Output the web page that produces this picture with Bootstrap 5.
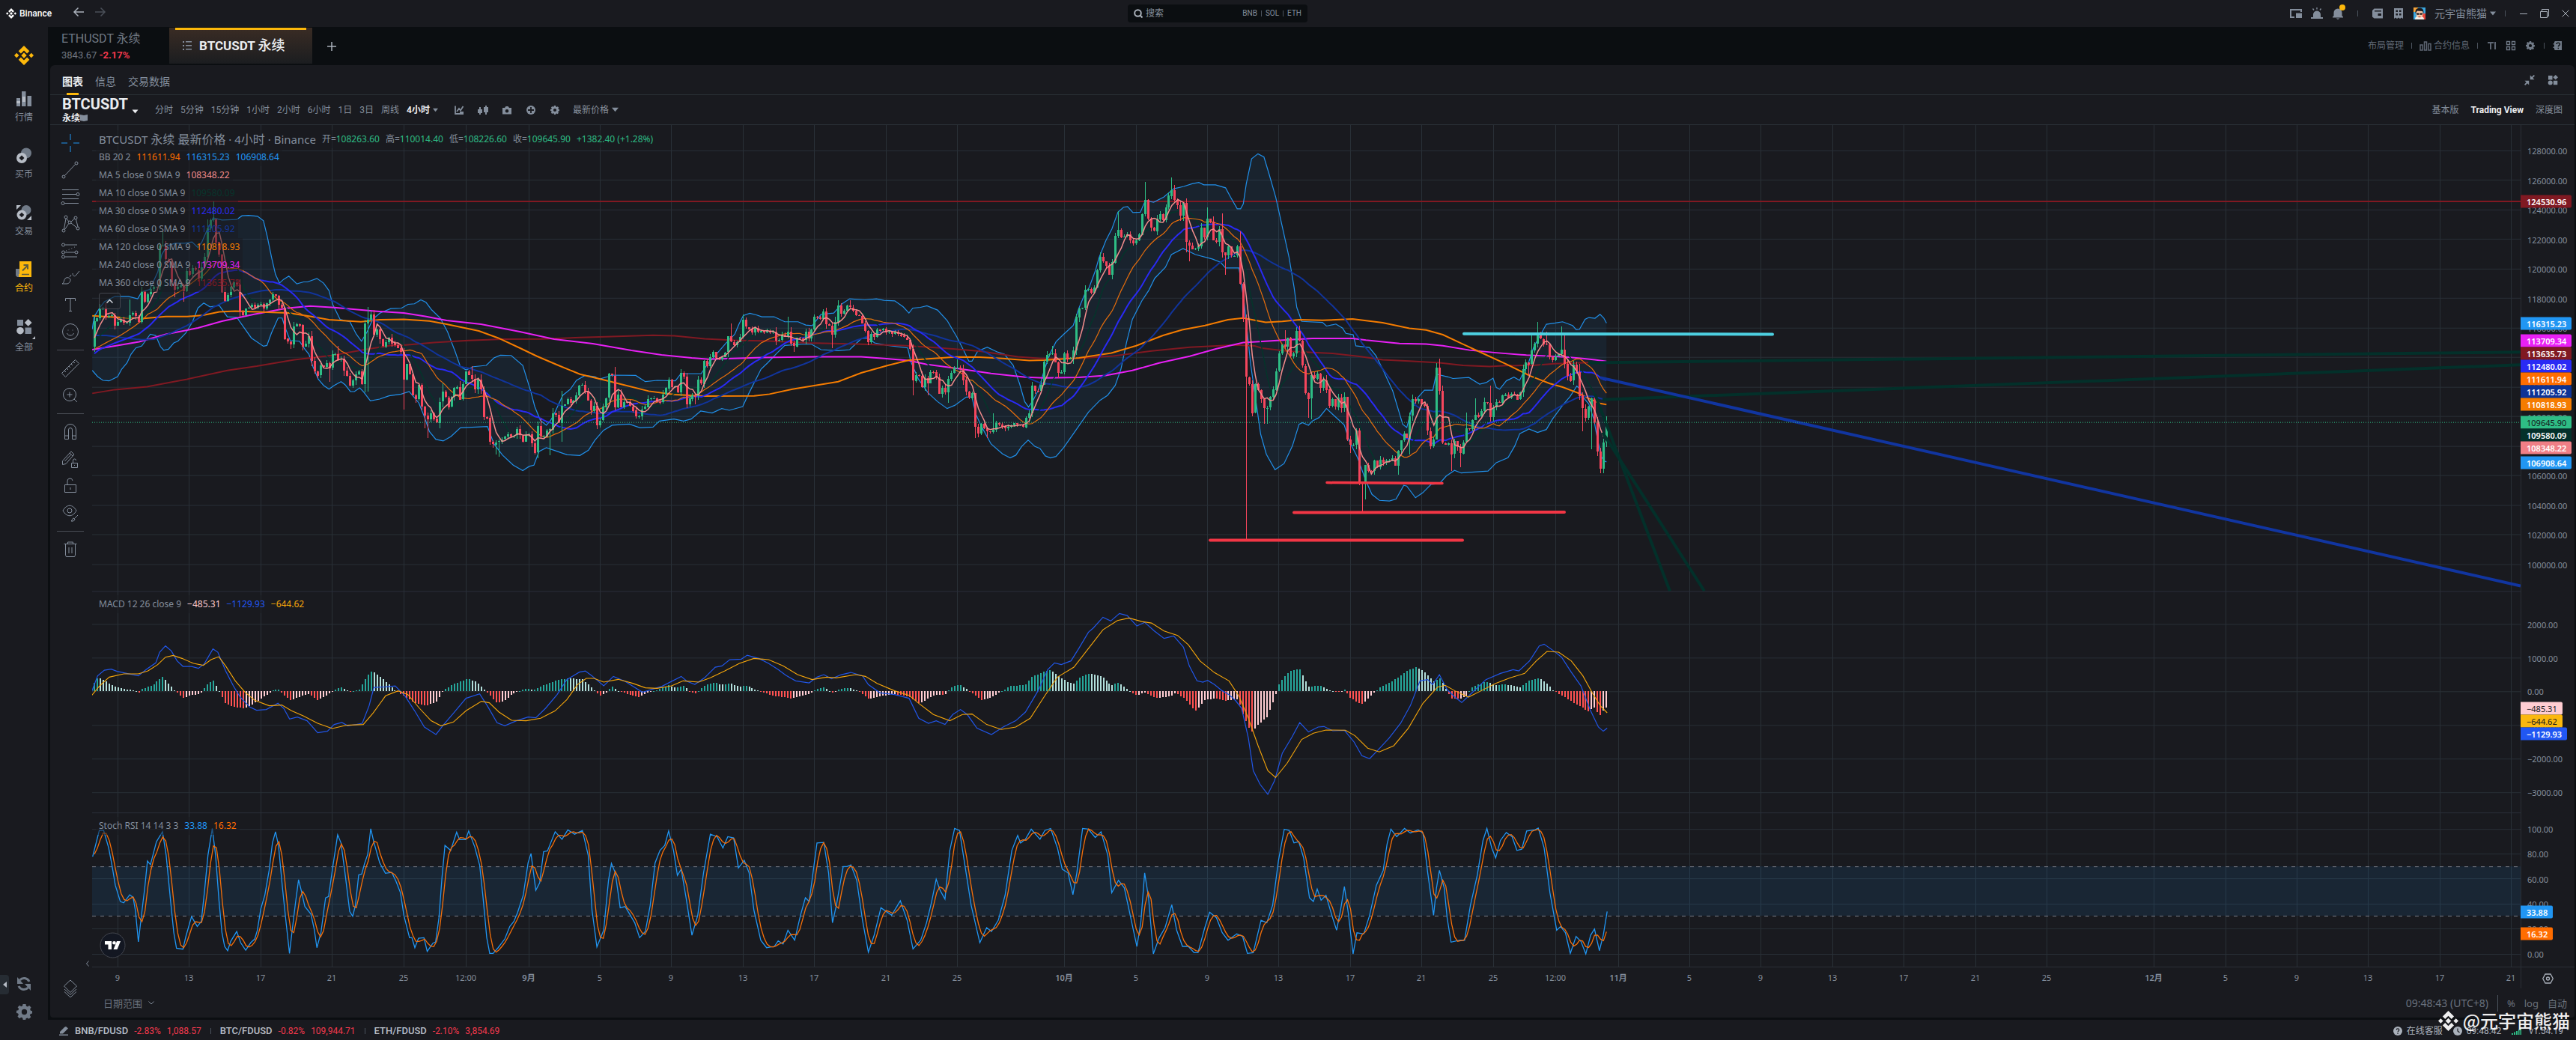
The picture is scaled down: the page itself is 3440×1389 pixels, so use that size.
<!DOCTYPE html>
<html lang="zh-CN" data-bs-theme="dark">
<head>
<meta charset="utf-8">
<meta name="viewport" content="width=device-width, initial-scale=1">
<title>Binance - BTCUSDT 永续</title>
<link href="https://cdn.jsdelivr.net/npm/bootstrap@5.3.0/dist/css/bootstrap.min.css" rel="stylesheet">
<style>
:root{--ink:#191a1f;--deep:#0b0e11;--rule:#2a3036;--dim:#848e9c;--faint:#5e6673;--gold:#fcb80b;--up:#2ebd85;--down:#f6465d}
body{font-family:Roboto,"Noto Sans CJK SC",sans-serif;font-size:12px;line-height:16px;background:var(--deep);color:var(--dim);height:100vh;overflow:hidden}
.btn{--bs-btn-font-size:12px;--bs-btn-line-height:16px;--bs-btn-color:inherit;color:inherit;white-space:nowrap}
a{color:inherit;text-decoration:none;white-space:nowrap}
svg.ico{width:16px;height:16px;display:block;flex:none}
.topline{height:36px;background:var(--ink)}
.seek{width:240px;height:24px;background:var(--deep);border-radius:4px;left:calc(50% - 214px);top:6px}
.seek input{width:110px;height:22px;line-height:22px;background:transparent;border:0;outline:0;color:var(--dim);padding:0;font-size:12px}
.seek input::placeholder{color:var(--dim);opacity:1}
.seek a{font-size:10px}
.tick{width:1px;height:8px;background:#4a525c;flex:none}
.side{width:64px;background:var(--ink)}
.side .slot{height:76px;gap:6px}
.side .slot svg{width:22px;height:22px}
.side .gold{color:var(--gold)}
.handle{left:0;bottom:61px;width:12px;height:26px;background:#262c33;border-radius:0 4px 4px 0}
.tabs-row{height:51px}
.eth-tab{width:162px;padding:6px 0 0 18px;color:#6f7782}
.eth-tab .nm{font-size:16px;line-height:20px}
.eth-tab .pr{font-size:13px;line-height:24px}
.btc-tab{width:191px;height:48px;margin-top:1px;background:linear-gradient(#3a2c24,#1b1d20);color:#eaecef;font-size:17px;font-weight:700}
.btc-tab::before{content:"";position:absolute;left:8px;right:8px;top:0;height:3px;background:var(--gold)}
.btc-tab .cj{font-size:18px;font-weight:500}
.panel{background:var(--ink);border-radius:6px 6px 4px 4px;margin:0 2px 0 3px}
.panel-head{height:40px;border-bottom:1px solid var(--rule);padding:0 21px 0 16px;font-size:14px}
.panel-head .btn{--bs-btn-font-size:14px}
.panel-head .act{color:#eaecef;font-weight:700}
.panel-head .act::after{content:"";position:absolute;left:6px;bottom:-10px;width:16px;height:3px;background:var(--gold)}
.ctrl-row{height:40px;border-bottom:1px solid var(--rule);padding:0 16px}
.sym{width:124px;color:#eaecef}
.sym .big{font-size:20px;line-height:22px;font-weight:700}
.lit{color:#eaecef;font-weight:700}
.frames{gap:10px}
.tools{width:56px;padding:6px 3px 20px 0}
.tools .btn{height:36px;width:36px;display:flex;align-items:center;justify-content:center}
.tools .btn svg{width:28px;height:28px;fill:none;stroke:#848e9c;stroke-width:1}
.tools hr{width:36px;margin:6px 0;border-top:1px solid #4a4d55;opacity:1}
.plot{font-family:"Noto Sans","Noto Sans CJK SC",sans-serif}
.plot svg.big{position:absolute;inset:0;width:100%;height:100%}
.lgd{position:absolute;left:5px;z-index:2;line-height:24px;font-size:12px;white-space:nowrap}
.lgd .ln{background:rgba(25,26,31,.5);padding:0 4px;width:max-content;gap:8px}
.lgd .ttl{font-size:15px}.lgd .ttl .cj{font-size:16px}
.scale{width:72px;border-left:1px solid var(--rule);font-family:"Noto Sans",sans-serif;font-size:11px}
.scale span{position:absolute;left:8px;line-height:17px;transform:translateY(-50%)}
.scale span.tagv{left:-1px;padding:0 8px;width:68px;height:17px;border-radius:0 2px 2px 0;color:#fff;font-weight:600}
.dates{height:28px;font-family:"Noto Sans","Noto Sans CJK SC",sans-serif;font-size:11px}
.dates span{position:absolute;top:6px;transform:translateX(-50%)}
.dates-end{width:72px;border-left:1px solid var(--rule)}
.below{height:39px;padding:0 10px 0 15px;font-family:"Noto Sans","Noto Sans CJK SC",sans-serif;color:#6b727d}
.below .btn{font-size:13px}
.below .clock{font-size:14px}
.foot{height:27px;background:var(--ink);padding:3px 17px 0 14px}
.foot b{font-size:13px;font-weight:500;color:#b7bdc6}
.foot .neg,.neg{color:#f6394d}
.fold{left:9px;top:224px;width:29px;height:22px;border:1px solid #43464e!important;border-radius:3px;z-index:3;background:rgba(25,26,31,.6)!important;display:flex;align-items:center;justify-content:center}
.tvmark{left:10px;bottom:11px;width:35px;height:35px;z-index:3}
.stamp{right:8px;bottom:9px;height:34px;color:#fff;font-family:"Noto Sans CJK SC",sans-serif;font-size:24px;font-weight:500;line-height:34px;opacity:.93;pointer-events:none;z-index:5;gap:6px}
</style>
<script src="https://cdn.jsdelivr.net/npm/bootstrap@5.3.0/dist/js/bootstrap.bundle.min.js"></script>
</head>
<body class="d-flex flex-column m-0">
<svg width="0" height="0" class="position-absolute" aria-hidden="true">
<symbol id="bnb" viewBox="0 0 26 26"><path fill="currentColor" d="M13 0l7.3 7.3-3.2 3.2L13 6.4 8.9 10.500 5.700 7.300zM3.200 9.800L6.400 13l-3.200 3.200L0 13zM22.800 9.800L26 13l-3.200 3.200L19.600 13zM13 9.300l3.700 3.700-3.700 3.700L9.300 13zM8.900 15.500l4.100 4.100 4.100-4.100 3.200 3.200L13 26l-7.300-7.300z"/></symbol>
<symbol id="gear" viewBox="0 0 16 16"><path fill="currentColor" fill-rule="evenodd" d="M6.500 0h3l.4 2 1.500.6L13 1.500 14.900 3.500l-1.100 1.700.6 1.500 1.600.3v2.600l-1.800.4-.6 1.500 1.100 1.600-2 2-1.600-1.100-1.500.6L9.300 16H6.600l-.4-1.900-1.500-.6-1.700 1.100-1.900-2L2.200 11l-.6-1.500L0 9.200V6.600l1.800-.4.600-1.400L1.200 3.200l2-1.900 1.500 1.100 1.500-.6zM8 5.200a2.800 2.800 0 100 5.600 2.800 2.800 0 000-5.600z"/></symbol>
<symbol id="caret" viewBox="0 0 8 6"><path fill="currentColor" d="M0 .5h8L4 5.500z"/></symbol>
<symbol id="apps" viewBox="0 0 16 16"><path fill="currentColor" d="M2 2h5.500v5.500H2zM11.700.900l3.300 3.300-3.300 3.300-3.300-3.300zM8.800 8.800h5.500v5.500H8.800z"/><circle cx="4.700" cy="11.600" r="3" fill="currentColor"/></symbol>
</svg>

<header class="topline d-flex align-items-center position-relative flex-shrink-0">
  <a href="#" class="d-flex align-items-center text-white ms-2"><svg class="ico" style="width:14px;height:14px"><use href="#bnb"/></svg><span class="ms-1 fw-medium">Binance</span></a>
  <div class="d-flex ms-4 ps-1 pb-1" style="gap:13px">
    <button class="btn p-0 border-0" aria-label="后退"><svg class="ico" viewBox="0 0 16 16" fill="none" stroke="#aab1bb" stroke-width="1.500"><path d="M15 8H2M7.500 2.500L2 8l5.500 5.500"/></svg></button>
    <button class="btn p-0 border-0" aria-label="前进"><svg class="ico" viewBox="0 0 16 16" fill="none" stroke="#4a4f58" stroke-width="1.500"><path d="M1 8h13M8.500 2.500L14 8l-5.500 5.500"/></svg></button>
  </div>
  <div class="seek d-flex align-items-center position-absolute px-2">
    <svg class="ico me-1" style="width:12px;height:12px" viewBox="0 0 12 12" fill="none" stroke="#aab1bb" stroke-width="2"><circle cx="5.500" cy="5.500" r="4.300"/><path d="M8.500 8.500l3 3"/></svg>
    <label class="visually-hidden" for="q">搜索</label><input id="q" type="text" placeholder="搜索">
    <div class="d-flex align-items-center ms-auto" style="gap:5px"><a href="#">BNB</a><i class="tick"></i><a href="#">SOL</a><i class="tick"></i><a href="#">ETH</a></div>
  </div>
  <div class="d-flex align-items-center ms-auto" style="gap:12px;padding-right:6px">
    <button class="btn p-0 border-0" aria-label="画中画"><svg class="ico" viewBox="0 0 16 16"><path fill="#848e9c" d="M0 2h16v4h-2V4H2v8h4v2H0z"/><path fill="#848e9c" d="M8 7.500h8V14H8z"/></svg></button>
    <button class="btn p-0 border-0" aria-label="提醒"><svg class="ico" viewBox="0 0 16 16"><path fill="#848e9c" d="M3 13V9.500a5 5 0 0110 0V13zM0 13h16v2H0z"/><path stroke="#848e9c" stroke-width="1.400" d="M8 0v2.500M2.500 1.500L4 3.500M13.500 1.500L12 3.500"/></svg></button>
    <button class="btn p-0 border-0 position-relative" aria-label="通知"><svg class="ico" viewBox="0 0 16 16"><path fill="#848e9c" d="M2.500 11V7a5.500 5.500 0 0111 0v4l1.500 1.500v1H1v-1zM5.500 14.500h5L8 16z"/></svg><i class="position-absolute rounded-circle" style="width:8px;height:8px;background:#fcb80b;right:-2px;top:-4px"></i></button>
    <i class="tick" style="margin:0 6px"></i>
    <button class="btn p-0 border-0" aria-label="钱包"><svg class="ico" viewBox="0 0 16 16"><path fill="#848e9c" fill-rule="evenodd" d="M3.500 1.500H15v13H3.500L1 12.500V4zM4 4v1.500h9V4zM8.500 8v3H13V8z"/></svg></button>
    <button class="btn p-0 border-0" aria-label="订单"><svg class="ico" viewBox="0 0 16 16"><path fill="#848e9c" fill-rule="evenodd" d="M2 1h12v14l-2-1.500L10 15l-2-1.500L6 15l-2-1.500L2 15zM4.500 3.500V6H7V3.500zM9 3.500V6h2.500V3.500zM4.500 8v2.500H7V8zM9 8v2.500h2.500V8z"/></svg></button>
    <svg class="ico" viewBox="0 0 16 16"><path fill="#3aa7e0" d="M0 0h16v16H0z"/><path fill="#e8443a" d="M9 8h7v8H9z"/><path fill="#f3a33a" d="M0 0h6v6H0z"/><path fill="#f3f0ea" d="M2 16c0-4 3-4.500 6-4.500s6 1 6 4.500z"/><ellipse cx="8" cy="8" rx="4.800" ry="5.800" fill="#f6c7a6"/><path fill="#1c1a1c" d="M2.500 8C2 2 5 .8 8.500.800 12.500.800 14 3.500 13.300 8L12 5 5 4.500zM3.500 7.500h4v2.200h-3zM8.500 7.500h4l-1 2.200h-3z"/><path fill="#c0392b" d="M6.500 12h3v1h-3z"/></svg>
    <a href="#" class="d-flex align-items-center gap-1" style="font-size:14px">元宇宙熊猫<svg style="width:8px;height:6px"><use href="#caret"/></svg></a>
    <i class="tick me-1"></i>
    <button class="btn p-0 border-0" aria-label="最小化"><svg class="ico" viewBox="0 0 16 16"><path stroke="#aab1bb" d="M3 8.500h10"/></svg></button>
    <button class="btn p-0 border-0" aria-label="还原"><svg class="ico" viewBox="0 0 16 16" fill="none" stroke="#aab1bb"><path d="M2.500 5.500h9v8h-9zM4.500 5V2.500h9v9H12"/></svg></button>
    <button class="btn p-0 border-0" aria-label="关闭"><svg class="ico" viewBox="0 0 16 16" fill="none" stroke="#aab1bb"><path d="M3.500 3.500l9 9M12.500 3.500l-9 9"/></svg></button>
  </div>
</header>

<div class="d-flex flex-fill" style="min-height:0">
<nav class="side d-flex flex-column align-items-center flex-shrink-0 position-relative">
  <a href="#" class="gold" style="margin:25px 0 34px"><svg style="width:26px;height:26px;display:block"><use href="#bnb"/></svg></a>
  <a href="#" class="slot d-flex flex-column align-items-center"><svg viewBox="0 0 22 22"><path fill="#848e9c" d="M1 10h5v11H1zM8 1h5.500v20H8zM15.500 7H21v14h-5.500z"/><path fill="#b7bdc6" d="M1 14h5v3H1zM9 8h4v7H9z"/></svg><span>行情</span></a>
  <a href="#" class="slot d-flex flex-column align-items-center"><svg viewBox="0 0 22 22"><circle cx="14" cy="7.500" r="7" fill="#707a87"/><circle cx="8" cy="14" r="7" fill="#b7bdc6"/><path fill="#191a1f" d="M8 10.500l3.500 3.500L8 17.500 4.500 14z"/></svg><span>买币</span></a>
  <a href="#" class="slot d-flex flex-column align-items-center"><svg viewBox="0 0 22 22"><circle cx="14" cy="7.500" r="6.500" fill="#707a87"/><circle cx="8" cy="14" r="6.500" fill="#b7bdc6"/><path fill="#191a1f" d="M8 10.700l3.300 3.300L8 17.300 4.700 14z"/><path fill="#b7bdc6" d="M1 1h6L1 7zM21 15v6h-6z"/></svg><span>交易</span></a>
  <a href="#" class="slot d-flex flex-column align-items-center gold"><svg viewBox="0 0 22 22"><path fill="#707a87" d="M0 10h8v11H2l-2-2z"/><path fill="#fcb80b" d="M5 0h16v21H4v-4h1z"/><path d="M9 12.500l7-7M10.500 5H16v5.500" fill="none" stroke="#5d5c3e" stroke-width="2"/><path stroke="#5d5c3e" stroke-width="1.500" d="M8 17.500h10"/></svg><span>合约</span></a>
  <a href="#" class="slot d-flex flex-column align-items-center position-relative" style="gap:9px"><svg viewBox="0 0 22 22"><path fill="#848e9c" d="M2 2h8v8H2zM12.500 12.500H21v8.500h-8.500z"/><path fill="#b7bdc6" d="M16.700 1l4.900 4.900-4.900 4.900-4.900-4.900z"/><circle cx="6" cy="16.700" r="4.800" fill="#b7bdc6"/></svg><span>全部</span><svg class="position-absolute" style="width:4px;height:4px;right:-3px;top:24px" viewBox="0 0 4 4"><path fill="#b7bdc6" d="M4 0v4H0z"/></svg></a>
  <button class="btn p-0 border-0 handle position-absolute text-center" aria-label="收起"><svg width="5" height="8" viewBox="0 0 5 8" class="d-block mx-auto"><path fill="#b7bdc6" d="M5 0v8L0 4z"/></svg></button>
  <div class="mt-auto d-flex flex-column align-items-center" style="gap:17px;padding-bottom:27px">
    <button class="btn p-0 border-0" aria-label="刷新"><svg width="20" height="20" viewBox="0 0 20 20" class="d-block" fill="none" stroke="#707a87" stroke-width="3"><path d="M17 7A7.500 7.500 0 004.500 5M3 13a7.500 7.500 0 0012.500 2"/><path fill="#707a87" stroke="none" d="M1 1v9h8zM19 19v-9h-8z"/></svg></button>
    <button class="btn p-0 border-0" aria-label="设置" style="color:#707a87"><svg width="21" height="21" class="d-block"><use href="#gear"/></svg></button>
  </div>
</nav>

<div class="d-flex flex-column flex-fill" style="min-width:0">
  <div class="tabs-row d-flex align-items-start flex-shrink-0">
    <a href="#" class="eth-tab d-flex flex-column"><span class="nm">ETHUSDT 永续</span><span class="pr">3843.67 <b class="neg">-2.17%</b></span></a>
    <a href="#" class="btc-tab d-flex align-items-center position-relative ps-3"><svg class="ico me-2" viewBox="0 0 16 16" fill="#848e9c"><path d="M2 2h2v2H2zM6 2h8v1.500H6zM2 7h2v2H2zM6 7h8v1.500H6zM2 12h2v2H2zM6 12h8v1.500H6z"/></svg><span>BTCUSDT <span class="cj">永续</span></span></a>
    <button class="btn p-0 border-0 ms-3 pt-3" aria-label="新增"><svg class="ico mt-1 ms-1" style="width:12px;height:12px" viewBox="0 0 12 12" stroke="#aab1bb" stroke-width="1.500"><path d="M6 0v12M0 6h12"/></svg></button>
    <div class="d-flex align-items-center ms-auto" style="height:50px;gap:10px;padding-right:16px;color:#5e6673">
      <a href="#">布局管理</a><i class="tick"></i>
      <a href="#" class="d-flex align-items-center" style="gap:3px"><svg class="ico" viewBox="0 0 16 16" fill="none" stroke="#5e6673" stroke-width="1.500"><path d="M1 7h3v7H1zM6.500 3h3v11h-3zM12 5.500h3V14h-3z"/></svg>合约信息</a><i class="tick"></i>
      <button class="btn p-0 border-0" aria-label="文字"><svg class="ico" viewBox="0 0 16 16" stroke="#5e6673" stroke-width="2" fill="none"><path d="M3 4h8M7 4v9M13 3v10"/></svg></button>
      <button class="btn p-0 border-0" aria-label="布局"><svg class="ico" viewBox="0 0 16 16" fill="none" stroke="#707a87" stroke-width="1.300"><path d="M2.500 2.500h4v4h-4zM9.500 2.500h4v4h-4zM2.500 9.500h4v4h-4zM9.500 9.500h4v4h-4z"/></svg></button>
      <button class="btn p-0 border-0" aria-label="设置" style="color:#707a87"><svg class="ico" style="padding:2px"><use href="#gear"/></svg></button>
      <i class="tick"></i>
      <button class="btn p-0 border-0" aria-label="帮助"><svg class="ico" viewBox="0 0 16 16"><path fill="#707a87" d="M4 2h9v12H4l-1-1v-2H1.500V9.500H3v-3H1.500V5H3V3z"/><path d="M6 6c0-2.500 4.500-2.500 4.500 0 0 1.700-2.200 1.500-2.200 3.300M8.300 10.800v1.400" fill="none" stroke="#0b0e11" stroke-width="1.400"/></svg></button>
    </div>
  </div>

  <main class="panel d-flex flex-column flex-fill" style="min-height:0">
    <div class="panel-head d-flex align-items-center flex-shrink-0">
      <div class="d-flex gap-3 mt-1">
        <button class="btn p-0 border-0 position-relative act">图表</button><button class="btn p-0 border-0">信息</button><button class="btn p-0 border-0">交易数据</button>
      </div>
      <div class="d-flex ms-auto" style="gap:15px">
        <button class="btn p-0 border-0" aria-label="缩小"><svg class="ico" viewBox="0 0 16 16"><path fill="#848e9c" d="M8.800 1.500v5.700h5.700L12.300 5 15 2.300 13.700 1 11 3.700zM7.200 14.500V8.800H1.500L3.700 11 1 13.700 2.300 15 5 12.300z"/></svg></button>
        <button class="btn p-0 border-0" aria-label="组件" style="color:#848e9c"><svg class="ico"><use href="#apps"/></svg></button>
      </div>
    </div>
    <div class="ctrl-row d-flex align-items-center flex-shrink-0">
      <button class="sym btn p-0 border-0 text-start position-relative"><span class="big d-block">BTCUSDT</span><span class="d-flex fw-bold align-items-center">永续<svg width="10" height="9" viewBox="0 0 10 9"><path fill="#848e9c" d="M0 0l5 1 5-1v8L5 9 0 8zM4.600 2h.800v5h-.800z"/></svg></span><svg class="position-absolute" style="left:93px;top:18px;width:9px;height:6px"><use href="#caret"/></svg></button>
      <div class="frames d-flex align-items-center">
        <button class="btn p-0 border-0">分时</button><button class="btn p-0 border-0">5分钟</button><button class="btn p-0 border-0">15分钟</button><button class="btn p-0 border-0">1小时</button><button class="btn p-0 border-0">2小时</button><button class="btn p-0 border-0">6小时</button><button class="btn p-0 border-0">1日</button><button class="btn p-0 border-0">3日</button><button class="btn p-0 border-0">周线</button>
        <button class="btn p-0 border-0 lit d-flex align-items-center gap-1">4小时<svg width="7" height="6" style="color:#848e9c"><use href="#caret"/></svg></button>
      </div>
      <div class="d-flex align-items-center gap-3 ms-3 ps-1">
        <button class="btn p-0 border-0" aria-label="指标"><svg class="ico" viewBox="0 0 16 16" fill="none" stroke="#848e9c" stroke-width="1.800"><path d="M3 2.500V13h11M5 10l3-4 2 2.500L13.500 3M9 11h5"/></svg></button>
        <button class="btn p-0 border-0" aria-label="K线样式"><svg class="ico" viewBox="0 0 16 16"><path fill="#848e9c" d="M1 7h2V4h2v3h2v5H5v2H3v-2H1zM9 4h2V2h2v2h2v7h-2v3h-2v-3H9z"/></svg></button>
        <button class="btn p-0 border-0" aria-label="截图"><svg class="ico" viewBox="0 0 16 16"><path fill="#848e9c" fill-rule="evenodd" d="M2 5h3l1.500-2h3L11 5h3v8.500H2zM8 7a2.300 2.300 0 100 4.600A2.300 2.300 0 008 7z"/></svg></button>
        <button class="btn p-0 border-0" aria-label="添加"><svg class="ico" viewBox="0 0 16 16"><circle cx="8" cy="8" r="6" fill="#848e9c"/><path d="M8 4v8M4 8h8" stroke="#191a1f" stroke-width="1.800"/></svg></button>
        <button class="btn p-0 border-0" aria-label="图表设置"><svg class="ico" style="padding:2px"><use href="#gear"/></svg></button>
        <button class="btn p-0 border-0 d-flex align-items-center gap-1">最新价格<svg width="9" height="7"><use href="#caret"/></svg></button>
      </div>
      <div class="d-flex ms-auto gap-3"><a href="#">基本版</a><a href="#" class="lit">Trading View</a><a href="#">深度图</a></div>
    </div>

    <div class="d-flex flex-fill" style="min-height:0">
      <div class="tools d-flex flex-column align-items-center flex-shrink-0 position-relative" id="tools"></div>
      <div class="d-flex flex-column flex-fill" style="min-width:0">
        <div class="d-flex flex-fill" style="min-height:0">
          <div class="plot flex-fill position-relative overflow-hidden" id="plot">
            <svg class="big" id="cv" viewBox="123 167 3243 1125" preserveAspectRatio="none"></svg>
            <div class="lgd" style="top:7px" id="lg1"></div>
            <button class="btn p-0 fold position-absolute" aria-label="折叠图例"><svg width="9" height="6" viewBox="0 0 9 6"><path d="M.5 5.500l4-4 4 4" fill="none" stroke="#d5d9df" stroke-width="1.500"/></svg></button>
            <div class="lgd" id="lg2"></div><div class="lgd" id="lg3"></div>
            <a href="#" class="tvmark position-absolute" aria-label="TradingView"><svg width="35" height="35" viewBox="0 0 35 35"><circle cx="17.500" cy="17.500" r="16.500" fill="#131722" stroke="#43464e"/><path fill="#fff" d="M7 12h9v11h-4.500v-6.500H7zM23 12h5l-4.500 11h-5z"/><circle cx="19.500" cy="14.300" r="2.300" fill="#fff"/></svg></a>
          </div>
          <div class="scale position-relative flex-shrink-0" id="scale"></div>
        </div>
        <div class="d-flex flex-shrink-0" style="border-top:1px solid var(--rule)"><div class="dates flex-fill position-relative" id="dates"></div><div class="dates-end"><svg class="mx-auto d-block mt-2" width="15" height="14" viewBox="0 0 15 14" fill="none" stroke="#aab1bb" stroke-width="1.300"><path d="M4 1h7l3.300 6L11 13H4L.7 7z"/><circle cx="7.500" cy="7" r="2"/></svg></div></div>
        <div class="below d-flex align-items-center flex-shrink-0">
          <button class="btn p-0 border-0 d-flex align-items-center gap-2">日期范围<svg width="8" height="5" viewBox="0 0 8 5"><path d="M.5.500L4 4 7.500.500" fill="none" stroke="#848e9c"/></svg></button>
          <div class="d-flex align-items-center ms-auto" style="gap:12px"><span class="clock">09:48:43 (UTC+8)</span><i class="tick" style="height:22px"></i><button class="btn p-0 border-0">%</button><button class="btn p-0 border-0">log</button><button class="btn p-0 border-0">自动</button></div>
        </div>
      </div>
    </div>
  </main>
  <div style="height:3px" class="flex-shrink-0"></div>
  <footer class="foot d-flex align-items-center flex-shrink-0 position-relative">
    <svg class="ico me-2" style="width:14px;height:14px" viewBox="0 0 14 14"><path fill="#848e9c" d="M2 8l6-6 2-1 3 2.500-7 7H2zM1 11.500h12V13H1z"/></svg>
    <a href="#" class="d-flex gap-2 neg"><b>BNB/FDUSD</b><span>-2.83%</span><span>1,088.57</span></a><i class="tick" style="margin:0 12px"></i>
    <a href="#" class="d-flex gap-2 neg"><b>BTC/FDUSD</b><span>-0.82%</span><span>109,944.71</span></a><i class="tick" style="margin:0 12px"></i>
    <a href="#" class="d-flex gap-2 neg"><b>ETH/FDUSD</b><span>-2.10%</span><span>3,854.69</span></a>
    <div class="d-flex align-items-center ms-auto" style="gap:6px;color:#aab1bb">
      <svg class="ico" style="width:12px;height:12px" viewBox="0 0 12 12"><circle cx="6" cy="6" r="6" fill="#aab1bb"/><path d="M4.200 4.600c0-2.200 3.600-2.200 3.600 0C7.800 6 6 5.800 6 7.300M6 8.500V10" stroke="#191a1f" stroke-width="1.200" fill="none"/></svg><a href="#" class="me-2">在线客服</a>
      <svg class="ico" style="width:12px;height:12px" viewBox="0 0 12 12"><circle cx="6" cy="6" r="6" fill="#aab1bb"/><path d="M6 2.500V6l2.500 2" stroke="#191a1f" stroke-width="1.200" fill="none"/></svg><span class="me-2">09:48:42</span>
      <svg width="13" height="9" viewBox="0 0 13 9" class="me-1"><path fill="#2ebd85" d="M0 7h2v2H0zM3 5.500h2V9H3zM6 4h2v5H6zM9 2h1.500v7H9zM11.500 0H13v9h-1.500z"/></svg><span>v1.54.19</span>
    </div>
  </footer>
</div>
</div>
<div class="stamp position-absolute d-flex align-items-center"><svg width="27" height="27"><use href="#bnb"/></svg><span>@元宇宙熊猫</span></div>

<script>
// drawing tools, top to bottom; "-" is a separator, ">" pushes the last one down
const toolIcons=[
['十字线','<path stroke="#2196f3" d="M14 2v8M14 18v8M2 14h8M18 14h8"/>'],
['趋势线','<circle cx="5" cy="23" r="2"/><circle cx="22" cy="5" r="2"/><path d="M6.500 21.500L20.500 6.500"/>'],
['斐波那契','<path d="M3 4.500h22M3 10.500h19M3 16.500h22M6 22.500h19"/><circle cx="24" cy="10.500" r="2"/><circle cx="4" cy="22.500" r="2"/>'],
['形态','<circle cx="5" cy="23" r="2"/><circle cx="8" cy="5" r="2"/><circle cx="13" cy="12" r="2"/><circle cx="21" cy="6" r="2"/><circle cx="24" cy="20" r="2"/><path d="M5.500 21L8 7M9 7l3 4M15 11l4.500-4M21.500 8L24 18M6.500 21.500l5-7.500M15 13l7.500 6"/>'],
['预测','<circle cx="4.500" cy="6" r="2"/><circle cx="4.500" cy="16" r="2"/><circle cx="22" cy="16" r="2"/><circle cx="4.500" cy="22" r="2"/><path d="M6.500 6H23M6.500 16H20M6.500 22H23"/><path stroke-dasharray="1 3" d="M8 14l14-6"/>'],
['画笔','<path d="M3 22c3-1 2-5 4-7 2.500-2.500 6-1 7 1 .5 3-2 6-5 6zM13 13l2-3M17 8c0 4 3 5 5 2l4-5"/>'],
['文字','<path d="M7.500 9V5.500h13V9M14 5.500v17M12 22.500h4"/>'],
['表情','<circle cx="14" cy="14" r="10.500"/><path d="M9.500 16c1 4 8 4 9 0M11 11.500v1M17 11.500v1"/>'],'-',
['尺子','<path d="M2.500 20.500L20.500 2.500l5 5-18 18zM6 17l2 2M9 14l2 2M12 11l2 2M15 8l2 2M18 5l2 2"/>'],
['放大','<circle cx="13" cy="13" r="8.500"/><path d="M19 19l4 4M13 9.500v7M9.500 13h7"/>'],'-',
['磁铁','<path d="M6.500 23.500V11a7.500 7.500 0 0115 0v12.500h-5V11a2.500 2.500 0 00-5 0v12.500zM6.500 19h5M16.500 19h5"/>'],
['锁定绘图','<path d="M3.500 21.500v-5L15 4l4 4L8 20.500zM13 6l4 4M6.500 17l8-8.500M15.500 19.500h8v6h-8zM17.500 19v-3a2 2 0 014 0M19.500 22v1"/>'],
['锁定','<path d="M6.500 12.500h15v10h-15zM10 12V8a3.500 3.500 0 017-1M14 16v3"/>'],
['隐藏','<path d="M4 11c5-9 13-9 18 0-5 9-13 9-18 0z"/><circle cx="13" cy="11" r="3"/><path d="M15 25c2-1 1-4 4-4l1 2-2 2zM20 21l4-4"/>'],'-',
['删除','<path d="M5.500 6.500h17M7.500 6.500v15l1 2h11l1-2v-15M10.500 6V4h7v2M12 11v8M16 11v8"/>'],'>',
['图层','<path d="M14 2l8.500 8L14 18.500 5.500 10zM6 14l8 7.500 8-7.500M6 17.500l8 7.500 8-7.500"/>']];
let th='',push='';
for(const t of toolIcons){
  if(t==='-'){th+='<hr>';continue}
  if(t==='>'){push=' mt-auto';continue}
  th+=`<button class="btn p-0 border-0${push}" aria-label="${t[0]}"><svg viewBox="0 0 28 28">${t[1]}</svg></button>`;
}
tools.innerHTML=th+'<svg class="position-absolute" style="width:4px;height:8px;left:48px;bottom:68px" viewBox="0 0 4 8"><path d="M3.500.500L.500 4l3 3.500" fill="none" stroke="#848e9c"/></svg>';

// plot space: x 123..3366, y 167..1292
const X0=123,XW=3243,Y0=167,YH=1125;
const px=x=>((x-X0)/XW*100).toFixed(3)+'%', py=y=>((y-Y0)/YH*100).toFixed(3)+'%';
// series pieces: origin x, origin y, units per px in x and y, then the points
const A=[0,0,2.8,3],B=[0,380,2.8,3],C=[120,160,1.742,3],D=[900,380,1.96,3],E=[1400,0,2.24,2.24],F=[1900,380,3,3],M=[120,800,.7724,3],S=[0,1060,2.24,3];
function series(...parts){
  const out=[];
  for(let i=0;i<parts.length;i+=2){const[ox,oy,sx,sy]=parts[i];
    for(const p of parts[i+1].trim().split(/\s+/)){const[a,b]=p.split(',').map(Number);out.push([ox+a/sx,oy+b/sy])}}
  return out.sort((p,q)=>p[0]-q[0]);
}
function at(pts,x){
  if(x<=pts[0][0])return pts[0][1];
  for(let i=1;i<pts.length;i++)if(x<=pts[i][0]){const[a,b]=pts[i-1],[c,d]=pts[i];return c===a?d:b+(d-b)*(x-a)/(c-a)}
  return pts[pts.length-1][1];
}
const N=509,STEP=3.975,bx=[...Array(N)].map((_,i)=>2145.3-STEP*(N-1-i));

const px4=series(
B,'351,147 363,135 374,95 385,92 396,130 407,127 418,123 429,165 441,150 452,140 463,153 474,152 485,122 497,115 508,128 519,150 530,28 541,70 552,40',
A,'563,1158 575,1150 587,1150 598,985 609,985 620,1040 629,1050 640,1130 650,1160 663,1150 675,1142 685,1165 695,1085 707,1100 719,1075 730,1082 741,1115 752,1070 763,1030 774,915 785,882 797,878 808,970 819,1020 830,1170 841,1205 852,1182 863,1150 875,1130 886,1140 897,1250',
B,'908,122 919,95 931,92 942,82 952,95 963,82 974,78 985,97 997,75 1008,60 1020,40 1031,45 1042,82 1054,95 1065,217 1076,228 1087,240 1098,167 1109,158 1120,163 1131,250 1142,237 1153,208 1164,307 1175,348 1186,365 1197,325 1208,330 1219,315 1230,335 1241,280 1253,278 1264,302 1275,298 1287,345 1298,367 1309,405 1320,385 1331,360 1342,348 1353,398 1365,155 1376,140 1388,120 1399,200 1410,180 1421,220 1432,248 1443,230 1454,212 1465,235 1476,243 1487,255 1499,270 1510,380 1521,318 1532,360 1543,445 1552,460',
C,'764,1062 771,1150 778,1185 785,1200 792,1175 799,1198 806,1213 813,1130 820,1090 827,1112 834,1150 841,1110 848,1075 855,1070 862,1120 869,1060 876,1008 883,1022 890,1038 897,1080 904,1042 911,1082 918,1190 925,1195 931,1290 938,1300 945,1292 952,1288 959,1280 966,1270 973,1260 980,1268 987,1265 994,1240 1001,1265 1008,1288 1015,1262 1022,1260 1029,1295 1036,1333 1041,1228 1048,1270 1055,1268 1062,1245 1069,1240 1076,1175 1083,1182 1090,1213 1097,1145 1104,1140 1111,1120 1118,1135 1125,1125 1132,1105 1139,1065 1146,1062 1153,1090 1160,1125 1167,1165 1174,1145 1181,1223 1188,1205 1195,1150 1202,1115 1209,1018 1216,1025 1222,1150 1229,1100 1236,1152 1243,1130 1250,1132 1257,1148 1264,1165 1271,1190 1278,1188 1285,1160 1292,1150 1299,1118 1306,1115 1313,1115 1320,1130 1327,1133 1334,1102 1341,1075 1348,1040 1355,1070 1362,1068 1369,1092 1375,1015 1382,1030 1389,1142 1396,1117 1403,1103 1410,1108 1417,1042 1424,1058 1431,965 1438,985 1445,950 1452,930 1459,955 1466,960 1473,950 1480,932 1487,868 1494,890 1501,902 1508,890 1515,870 1521,802 1528,830 1535,838 1542,852 1549,835 1556,850',
D,'228,185 235,190 243,185 251,190 260,188 268,225 275,222 283,200 290,208 297,188 305,235 313,248 321,213 329,217 337,222 345,188 353,215 360,180 368,130 376,132 383,138 391,108 399,160 407,165 415,200 422,150 430,85 438,117 446,105 454,85 462,92 470,105 478,122 486,125 493,155 501,185 509,230 517,198 525,210 533,180 541,185 549,178 556,192 564,190 572,200 580,190 588,200 596,205 604,212 611,222 617,258 625,385 632,362 640,365 648,410 656,375 663,395 671,350 679,352 687,372 695,438 703,415 711,433 718,378 726,355 734,333 742,332 750,338 758,382 765,430 773,455 781,435 789,570 797,597 804,558 812,575 820,588 828,592 836,583 844,555 852,560 859,568 867,577 875,570 883,565 891,555 899,562 907,565 913,572 920,533 928,515 936,405 944,425 952,427 960,402 967,308 975,282 983,278 991,275 999,312 1006,355 1014,350 1022,275 1030,300 1038,297 1046,265 1054,130 1061,95 1069,93 1077,20 1085,18 1093,32 1101,12',
E,'147,808 156,768 165,782 173,795 182,822 191,785 200,705 209,688 218,710 227,707 236,702 245,720 254,728 263,720 272,702 281,640 289,598 298,655 307,682 316,692 325,655 334,640 343,658 352,620 360,585 369,568 378,598 387,614 396,645 405,608 414,725 423,735 432,746 441,744 450,735 458,680 467,710 476,655 485,663 494,718 503,722 512,685 521,755 530,765 539,738 548,765 557,765 566,738 575,850 584,955 593,1128 602,1148 611,1235 620,1150 629,1168 638,1195 647,1222 655,1220 662,1188 671,1165 680,1110 689,1058 698,1030 707,1037 716,1010 725,1067 734,1058 743,990 752,1020 761,1095 770,1175 779,1192 788,1122 797,1132 806,1117 814,1160 823,1137 832,1165 841,1215 850,1195 859,1218 868,1190 877,1222 886,1188 895,1315 904,1330 913,1330 922,1287 931,1443 940,1445 949,1390 958,1408 967,1410 976,1378 985,1398 994,1375 1003,1385 1012,1378 1020,1377 1029,1370 1038,1392 1047,1348 1055,1318 1064,1298 1073,1312 1082,1245 1091,1195 1100,1202 1109,1195 1118,1210 1127,1215 1136,1290 1144,1335 1153,1315 1162,1100 1171,1170 1180,1325 1189,1330 1198,1325 1207,1358 1216,1320 1225,1338',
F,'151,677 163,632 175,577 187,578 199,542 211,522 223,530 235,508 247,472 259,474 271,530 283,492 295,472 307,474 319,445 331,440 343,452 352,437 364,440 376,460 388,432 400,340 412,312 424,320 436,265 448,238 460,202 472,218 484,238 496,240 508,290 520,302 532,287 544,278 556,260 568,318 580,365 592,386 604,322 616,350 628,445 640,497 652,534 664,490 676,455 688,550 700,670 712,740 724,634 736,555');
// one close per bar: nearest recorded point, else interpolated
const close=bx.map(x=>{let best=null,bd=1.9;for(const p of px4){const d=Math.abs(p[0]-x);if(d<bd){bd=d;best=p[1]}}return best===null?at(px4,x):best});
const sma=(n,lead)=>{const l=lead&&series(...lead);return bx.map((x,i)=>{if(i<n-1)return l?at(l,x):NaN;let s=0;for(let k=0;k<n;k++)s+=close[i-k];return s/n})};
const ma5=sma(5,[B,'345,232 355,210 370,170 385,140']);
const ma10=sma(10,[B,'345,235 380,200 420,160 465,150']);
const ma20=sma(20,[B,'345,264 400,232 450,205 500,170 530,145 575,95']);
const ma30=sma(30,[B,'345,285 370,262 430,235 480,215 520,198 560,165 590,130 630,90 680,60']);
const ma60=sma(60,[B,'345,205 400,205 470,215 530,222 575,220 640,195 700,165 750,130 800,90 860,60 920,40 980,25 1040,20']);
const ma120=series(B,'345,126 400,130 530,137 620,129 700,129 760,124 820,110 880,107 1080,115 1160,128 1230,142 1350,150 1420,142 1510,140',C,'790,807 830,820 905,847 950,875 1000,915 1040,948 1090,985 1140,1020 1200,1045 1240,1062 1300,1088 1360,1102 1430,1108',D,'210,447 250,440 310,420 370,405 430,390 490,355 560,325 615,304 680,297 740,291 800,292 860,297 930,305 970,304 1060,295 1145,275 1210,246 1280,205 1330,182 1390,165 1450,142 1490,135',E,'650,965 700,962 750,957 820,959 910,955 1000,966 1080,983 1130,988 1180,1002 1240,1030 1300,1058 1370,1090 1440,1125 1500,1148',F,'560,412 620,435 680,465 710,477 736,482');
const ma240=series(B,'345,262 430,247 520,230 620,200 740,175 830,148 950,120 1000,110 1070,96 1160,87 1250,93 1400,107 1510,115',C,'780,788 830,805 910,820 1000,850 1080,880 1170,898 1260,925 1330,943 1400,955 1440,960',D,'230,293 370,290 490,290 550,297 615,305 660,320 740,337 830,357 920,372 970,375 1060,373 1130,365 1200,345 1270,315 1350,288 1420,258 1490,233 1540,229',E,'720,1017 790,1013 910,1013 950,1018 1050,1028 1130,1030 1180,1035 1260,1048 1340,1056 1430,1063 1500,1066',F,'580,292 640,297 690,302 736,309');
const ma360=series(B,'345,437 430,422 550,410 700,380 850,345 960,328 1100,302 1240,285 1370,260 1480,242',C,'720,905 800,893 880,885 960,880 1050,879 1140,873 1200,870 1310,864 1360,866 1430,878 1500,884',D,'250,227 350,235 480,239 600,245 700,255 800,268 900,290 960,297 1060,296 1150,287 1250,267 1350,252 1470,243 1520,247',E,'640,1042 720,1052 850,1058 930,1067 1000,1077 1080,1081 1170,1086 1240,1094 1320,1097 1380,1094',F,'360,326 450,324 530,318 600,316 690,313');
const bbU=series(B,'345,180 352,130 372,95 390,70 430,48 480,48 515,58 530,30 560,20',A,'590,1090 605,1020 625,985 655,975 690,975 718,970 740,992 755,970 775,920 797,873 830,882 885,880 905,865 930,863 963,867 985,885 1000,950 1015,1030 1030,1100 1045,1135 1060,1120 1080,1107 1110,1138 1135,1130 1150,1130 1185,1116 1210,1135 1230,1165',C,'565,740 582,800 605,810 620,860 632,888 645,850 658,800 675,775 700,757 725,755 740,740 755,738 770,722 782,732 795,762 815,795 832,850 850,930 862,990 875,1003 892,990 922,985 940,955 955,944 980,945 1007,985 1025,1085 1035,1150 1048,1205 1062,1225 1072,1205 1080,1180 1100,1105 1118,1080 1132,1045 1152,1025 1175,1030 1185,1040 1205,1030 1215,1024 1270,1025 1292,1050 1320,1045 1362,1047 1375,1018 1422,1018 1435,985 1460,935 1480,895 1500,860 1510,820 1520,785 1535,776 1550,782',D,'230,130 262,130 290,150 325,150 345,163 362,165 385,120 418,115 440,78 460,58 500,62 530,58 550,64 578,66 600,90 615,115 625,95 645,92 662,86 690,103 715,145 740,210 760,270 772,308 780,308 795,268 820,252 845,270 865,280 888,325 905,400 918,470 928,492 940,465 955,420 970,340 985,275 1000,230 1020,200 1045,165 1060,95 1075,40',E,'122,860 140,812 152,770 172,720 190,685 208,635 225,620 237,618 253,636 275,635 290,600 315,605 345,590 375,565 405,558 430,550 450,546 465,553 500,553 530,562 545,590 565,625 575,625 583,610 592,550 608,475 627,460 645,470 660,520 680,590 700,680 720,770 735,860 743,920 758,962 820,965 832,976 860,970 880,982 890,998 912,1002 920,1035 960,1040 980,1065 1000,1105 1030,1170 1060,1270 1072,1280 1085,1230 1105,1190 1125,1168 1150,1168 1160,1120 1195,1128 1210,1133 1258,1130 1290,1150 1310,1145 1330,1132 1340,1160 1350,1165 1370,1140',F,'365,372 388,385 405,350 425,310 445,250 470,205 495,160 530,155 560,150 600,165 615,182 628,180 650,140 665,133 690,136 710,120 725,135 736,155');
const bbL=series(B,'345,345 365,370 385,385 408,387 440,370 455,340 475,315 490,280 508,255 530,247 545,225 562,200 582,205 600,250 612,264 630,260 650,235 665,228 695,195 720,150 740,95 762,75 785,90 820,85 850,130 885,132 910,170 940,215 985,248 998,245 1015,195 1040,135 1055,135 1065,170 1085,225 1120,228 1140,260 1155,280 1170,330 1190,380 1210,405 1230,420 1250,405 1275,390 1290,402 1310,430 1325,430 1345,415 1360,432 1385,467 1420,460 1455,447 1500,440 1530,430',C,'765,1135 778,1190 790,1250 805,1282 822,1288 840,1270 862,1235 925,1230 940,1300 960,1345 985,1385 1007,1407 1022,1390 1033,1385 1045,1330 1062,1315 1085,1328 1110,1343 1140,1346 1160,1325 1175,1285 1195,1245 1215,1225 1255,1220 1280,1235 1310,1232 1325,1208',D,'0,540 25,548 45,540 70,508 100,516 125,498 145,505 180,490 195,440 228,340 245,315 270,275 290,245 335,240 360,240 385,262 430,266 460,262 490,218 508,215 525,235 560,245 612,255 620,310 640,380 665,435 690,470 715,498 735,485 765,452 780,452 790,520 805,570 830,640 860,680 880,696 895,685 910,650 927,625 945,650 958,658 972,688 985,696 1000,690 1020,655 1045,600 1070,545 1085,512 1115,465 1135,445 1155,405 1170,340 1185,230 1200,140 1225,65',E,'300,870 318,833 350,800 368,762 403,744 440,762 490,775 515,785 530,802 570,802 585,900 605,1090 620,1195 635,1300 652,1360 678,1406 705,1388 730,1335 750,1270 760,1265 778,1273 790,1260 810,1250 832,1223 850,1240 885,1272 900,1320 925,1370 950,1440 968,1480 990,1498 1020,1500 1040,1494 1063,1453 1072,1455 1098,1490 1120,1475 1145,1450 1170,1448 1190,1425 1215,1408 1235,1416 1315,1410 1340,1385 1375,1370 1395,1335 1410,1298',F,'410,588 425,580 460,594 495,582 520,540 560,485 590,450 617,408 625,415 640,450 665,480 685,540 700,620 715,690 725,708 736,712');

const line=(pts,c,w,ex='')=>`<polyline points="${pts.map(p=>p[0].toFixed(1)+','+p[1].toFixed(1)).join(' ')}" fill="none" stroke="${c}" stroke-width="${w}" ${ex}/>`;
const zip=a=>bx.map((x,i)=>[x,a[i]]);
const seg=(x1,y1,x2,y2,c,w,ex='')=>`<line x1="${x1}" y1="${y1}" x2="${x2}" y2="${y2}" stroke="${c}" stroke-width="${w}" ${ex}/>`;
const R=3366,grid='#293037';
let g='<g shape-rendering="crispEdges">';
const cols=[[157,'9'],[252,'13'],[348,'17'],[443,'21'],[539,'25'],[622,'12:00'],[706,'9月'],[801,'5'],[896,'9'],[992,'13'],[1087,'17'],[1183,'21'],[1278,'25'],[1421,'10月'],[1517,'5'],[1612,'9'],[1707,'13'],[1803,'17'],[1898,'21'],[1994,'25'],[2077,'12:00'],[2161,'11月'],[2256,'5'],[2351,'9'],[2447,'13'],[2542,'17'],[2638,'21'],[2733,'25'],[2876,'12月'],[2972,'5'],[3067,'9'],[3162,'13'],[3258,'17'],[3353,'21']];
for(const c of cols)g+=seg(c[0]+.5,167,c[0]+.5,1292,grid,1);
const yP=p=>201.3+(128000-p)/2000*39.51;
for(let p=128000;p>=100000;p-=2000)g+=seg(X0,Math.floor(yP(p))+.5,R,Math.floor(yP(p))+.5,grid,1);
for(const y of [834.5,879.5,924.5,969.5,1014.5,1059.5,1108.5,1141.5,1174.5,1208.5,1241.5,1275.5])g+=seg(X0,y,R,y,grid,1);
g+='</g>';
g+=`<polygon fill="#2196f3" fill-opacity=".075" points="${bbU.concat([...bbL].reverse()).map(p=>p[0].toFixed(1)+','+p[1].toFixed(1)).join(' ')}"/>`;
g+=seg(X0,269,R,269,'#801922',2,'shape-rendering="crispEdges"');
g+=line(bbU,'#2190ea',1.2)+line(bbL,'#2190ea',1.2);
g+=line(ma360,'#801922',2)+line(ma240,'#e820f5',2)+line(ma120,'#f57c00',2);
g+=line(zip(ma60),'#11349b',2)+line(zip(ma30),'#2a2af5',2)+line(zip(ma10),'#05352b',1.5)+line(zip(ma20),'#e86e0c',1.2);
// candles
let seed=7;const rnd=()=>(seed=(seed*16807)%2147483647)/2147483647;
const wick=series(E,'592,1615 940,1536 289,545 369,530 209,632 405,640 476,620 521,638 575,692 414,755 647,1268 655,1268 779,1248 788,1253 904,1357 1047,1421 1171,1075 1207,1408 530,822 423,782 947,1492 707,987 1078,1360',F,'436,202 460,150 556,168 568,202 676,660 640,588 115,747 151,732 67,297 211,457 271,405 175,513 712,755 724,752 400,328 424,362 496,190 628,318 736,528 271,548',B,'1510,500 1365,432 1376,90 1230,392 485,60 1264,247 1087,257 352,120 897,125',A,'797,808 609,930 774,880 650,1190 685,1210',C,'785,1275 952,1350 1041,1355 1069,1343 1097,1290 1222,990 1181,1232 778,1235 820,1055 945,1343 938,1315 890,988 1048,1196 1492,815 645,1090 731,1160 1097,1086 1375,998 1411,1140',D,'297,130 415,255 625,443 718,473 789,615 820,615 836,517 430,62 391,98 150,155 313,272 663,446 742,300 991,247 462,62 1006,375');
let k='<g shape-rendering="crispEdges">';
for(let i=0;i<N;i++){
  const x=Math.round(bx[i]-.5),o=i?close[i-1]:463,c=close[i],up=c<=o,col=up?'#2ebd85':'#f6465d';
  const body=Math.abs(o-c),r=2+Math.min(body,14)*.3;
  let t=Math.min(o,c)-rnd()*r*1.2,b=Math.max(o,c)+rnd()*r*1.2;
  for(const w of wick)if(Math.abs(w[0]-bx[i])<1.98){if(w[1]<t)t=w[1];if(w[1]>b)b=w[1]}
  k+=`<rect x="${x}" y="${Math.round(t)}" width="1" height="${Math.max(1,Math.round(b-t))}" fill="${col}"/><rect x="${x-1}" y="${Math.round(Math.min(o,c))}" width="3" height="${Math.max(1,Math.round(body))}" fill="${col}"/>`;
}
g+=k+'</g>'+line(zip(ma5).slice(0,-1),'#f28c8c',1.5);
// projections and hand drawn levels
const G='#03302a',cap='stroke-linecap="round"';
g+=seg(2121,484.700,3366,470.500,G,4)+seg(2140,534,3366,487.500,G,4)+seg(2130,527,2230,790,G,4)+seg(2140,578,2276,790,G,4);
g+=seg(2137,504.700,3366,783,'#1135a0',4);
g+=seg(1955,446,2367,446.700,'#4dd0e1',4,cap)+seg(1772,645,1926,646,'#f23645',3.500,cap)+seg(1728,685,2089,684.500,'#f23645',4,cap)+seg(1616,722,1953,722,'#f23645',4,cap);
g+=seg(X0,564.500,R,564.500,'#2ebd85',1,'stroke-dasharray="1 2" shape-rendering="crispEdges"');
// MACD
const hist=series(M,'3,350 8,320 15,330 25,355 40,368 48,373 51,380 54,364 65,350 75,315 82,345 88,373 97,400 105,390 114,385 120,350 127,330 133,368 140,425 147,435 160,443 170,420 180,395 188,372 195,366 199,385 207,410 214,400 220,392 226,385 235,410 245,390 252,370 258,357 268,375 278,368 283,330 290,294 296,305 305,335 315,370 325,395 335,420 348,432 358,415 365,370 375,345 390,324 398,335 408,372 420,422 428,410 436,385 445,370 452,362 457,370 465,356 480,332 493,322 508,326 518,360 526,393 533,380 538,354 545,373 555,385 566,398 575,380 585,370 597,350 604,360 613,352 620,380 625,382 635,350 645,340 652,348 660,342 670,355 676,350 690,372 705,393 725,403 742,385 750,364 757,358 766,380 775,364 783,360 792,373 803,405 815,395 830,385 845,395 856,424 868,395 875,388 882,390 888,360 897,346 905,368 912,385 919,410 930,400 940,375 950,354 965,348 972,315 990,288 998,310 1010,340 1015,345 1022,315 1030,303 1044,315 1053,350 1062,340 1072,370 1080,392 1088,378 1100,402 1115,395 1120,380 1130,405 1140,455 1150,410 1160,402 1172,412 1185,405 1190,470 1198,540 1205,510 1215,475 1224,380 1227,340 1238,292 1248,285 1257,355 1270,352 1280,372 1290,377 1295,366 1300,400 1312,428 1322,390 1330,362 1345,330 1358,295 1368,276 1378,300 1386,335 1393,320 1398,360 1404,402 1412,405 1420,395 1425,360 1440,335 1450,350 1460,346 1475,358 1485,330 1495,322 1502,340 1510,373 1520,395 1530,420 1540,440 1545,455 1552,440 1558,472 1563,440');
let h='<g shape-rendering="crispEdges">',last=0;
for(const x of bx){const v=924.5-at(hist,x),col=v>=0?(v>=last?'#26a69a':'#b2dfdb'):(v<=last?'#ff5252':'#ffcdd2');last=v;
  h+=`<rect x="${Math.round(x-1)}" y="${Math.round(v>=0?924-v:924)}" width="2" height="${Math.max(1,Math.round(Math.abs(v)))}" fill="${col}"/>`}
g+=h+'</g>';
g+=line(series(M,'2,372 8,310 15,287 22,283 28,292 38,300 50,310 58,285 68,258 72,215 78,190 84,210 90,250 96,272 105,272 112,280 118,262 127,202 132,215 140,290 148,350 155,395 165,435 172,448 182,445 194,420 200,440 206,483 214,475 224,490 235,538 245,532 252,505 260,497 266,510 275,505 281,500 288,430 293,356 305,354 315,350 325,390 335,450 345,515 357,545 365,505 375,460 388,400 402,382 410,430 420,498 428,510 440,490 452,475 460,478 470,440 482,385 492,325 505,295 511,290 518,310 530,350 540,312 552,332 570,376 590,352 610,312 616,332 624,344 634,318 645,275 652,270 660,245 672,243 678,227 690,240 700,260 710,285 718,308 728,330 742,338 750,315 757,305 765,322 775,305 785,296 797,310 803,345 815,378 830,385 845,400 855,480 865,500 873,490 882,505 890,465 898,445 905,465 915,520 930,545 942,515 955,490 965,455 978,370 988,285 995,258 1002,265 1012,250 1020,200 1030,135 1035,118 1045,75 1053,90 1062,60 1070,68 1080,110 1088,95 1098,130 1108,160 1118,150 1128,195 1134,270 1142,330 1148,335 1153,328 1160,345 1168,370 1175,385 1182,410 1188,440 1195,560 1200,690 1207,745 1215,785 1222,730 1230,620 1240,555 1248,497 1257,535 1267,515 1273,513 1282,530 1294,528 1304,575 1312,630 1320,642 1328,610 1340,560 1352,500 1362,430 1372,330 1380,325 1385,345 1392,305 1400,365 1408,395 1415,417 1425,380 1440,325 1455,300 1468,285 1474,290 1485,250 1495,190 1500,183 1510,210 1518,235 1528,295 1538,350 1548,450 1556,515 1561,532 1565,520'),'#2156e8',1.2);
g+=line(series(M,'2,388 10,350 20,315 35,302 50,302 60,290 70,265 78,235 86,228 95,240 107,260 117,268 125,245 133,233 140,270 150,330 160,375 170,408 185,430 198,427 208,450 220,470 235,500 250,521 265,508 282,505 292,460 305,390 318,370 328,385 340,440 352,490 362,510 375,495 388,450 404,412 412,418 422,455 435,488 450,490 465,480 480,450 492,405 503,345 512,320 520,320 530,335 545,324 560,340 573,358 585,360 600,350 612,330 628,335 640,318 655,290 670,260 685,240 700,245 715,270 730,305 745,325 760,315 770,318 790,305 800,312 812,340 830,370 845,388 855,420 870,465 887,490 900,465 910,463 925,505 940,525 955,515 970,480 985,390 998,315 1015,275 1030,200 1045,125 1060,88 1072,78 1085,92 1095,98 1108,130 1122,148 1133,185 1145,250 1160,297 1175,330 1185,390 1195,480 1205,590 1215,690 1223,718 1235,660 1250,565 1262,540 1275,527 1295,528 1305,550 1318,600 1330,615 1345,590 1360,520 1375,420 1390,355 1398,348 1408,370 1422,395 1435,370 1450,340 1465,318 1480,300 1492,250 1503,212 1515,215 1528,250 1540,310 1550,380 1558,430 1565,458'),'#f5a60b',1.1);
// Stoch RSI
g+=`<rect x="${X0}" y="1158" width="${XW}" height="66" fill="#2196f3" fill-opacity=".1"/>`;
for(const y of [1158.5,1224.5])g+=seg(X0,y,R,y,'#787b86',1,'stroke-dasharray="5 6" shape-rendering="crispEdges"');
const K=series(S,'277,255 297,150 310,150 325,220 335,290 345,370 360,435 370,440 388,408 398,418 405,470 414,597 425,470 433,380 441,272 450,287 468,195 486,155 497,250 510,430 520,560 528,622 547,626 556,575 573,495 590,535 602,515 612,390 622,250 635,142 645,250 655,430 664,560 672,615 681,632 690,595 708,555 720,600 735,630 750,600 762,585 770,550 780,465 792,410 805,310 815,200 824,155 833,210 845,380 855,510 866,643 875,540 884,440 893,347 902,395 912,455 930,485 940,545 948,620 960,560 966,500 974,420 983,415 995,300 1010,167 1020,200 1032,320 1046,475 1055,494 1063,450 1073,328 1082,325 1090,285 1100,245 1109,143 1118,195 1136,280 1153,322 1172,318 1185,355 1198,400 1208,490 1225,580 1232,580 1241,620 1252,582 1268,580 1278,635 1295,602 1303,597 1313,500 1322,340 1331,210 1348,230 1366,157 1375,187 1393,187 1402,152 1420,215 1435,290 1445,420 1456,580 1465,643 1475,643 1490,620 1510,585 1525,535 1537,515 1548,480',
M,'447,1190 452,1060 455,1022 460,1170 464,1140 468,1015 472,1012 480,935 487,965 493,928 500,945 508,930 514,1030 518,1250 523,1397 530,1330 535,1130 538,1062 542,1100 547,1240 552,1235 556,1260 562,1300 567,1360 573,1335 578,1230 583,1060 588,1010 593,990 597,932 602,1010 606,1110 610,1085 615,1200 621,1350 627,1270 633,1100 640,945 647,955 653,1000 658,955 664,960 669,1080 675,1050 680,1100 685,1250 692,1370 698,1400 706,1395 710,1373 715,1385 720,1330 727,1370 733,1270 738,1200 742,1215 750,980 757,978 762,1100 766,1300 770,1230 777,1075 781,1075 785,1068 791,1130 797,1290 803,1418 809,1350 816,1240 827,1270 836,1212 843,1290 849,1405 857,1370 863,1300 868,1220 873,1125 877,1170 882,1205 887,1010 892,922 897,930 903,1080 909,1230 918,1380 925,1320 930,1335 937,1290 944,1190 951,1010 957,950 960,980 965,965 971,925 980,965 985,930 991,922 998,1000 1003,1085 1009,1100 1014,1187 1018,1100 1024,922 1030,925 1037,958 1043,935 1050,1030 1054,1180 1061,1130 1067,1160 1072,1250 1080,1395 1084,1300 1088,1100 1092,1200 1097,1425 1103,1360 1109,1320 1116,1228 1121,1330 1127,1395 1133,1395 1139,1420 1143,1420 1150,1320 1155,1258 1162,1280 1168,1340 1174,1370 1183,1345 1189,1355 1194,1423 1200,1420 1208,1290 1214,1300 1220,1230 1226,1050 1232,925 1237,930 1242,980 1247,975 1252,1040 1258,1200 1262,1215 1266,1165 1270,1210 1275,1190 1281,1270 1286,1330 1290,1250 1294,1155 1298,1260 1303,1425 1307,1340 1314,1345 1320,1270 1327,1150 1334,1090 1338,985 1342,925 1348,955 1356,922 1362,940 1370,928 1375,940 1380,1100 1386,1270 1389,1160 1392,1090 1397,1160 1400,1280 1404,1378 1413,1370 1418,1370 1424,1230 1431,1110 1437,970 1441,922 1446,1000 1450,1040 1455,970 1461,938 1467,955 1472,1010 1477,1005 1482,932 1490,928 1494,920 1500,1000 1506,1180 1513,1330 1517,1315 1522,1340 1527,1423 1533,1355 1538,1375 1543,1425 1548,1350 1552,1325 1557,1412 1561,1350 1565,1255');
const Dl=bx.map(x=>[x,(at(K,x)+at(K,x-STEP)+at(K,x-2*STEP))/3]);
g+=line(K,'#2196f3',1.3)+line(Dl,'#f56f0a',1.3);
// pane separators
g+=seg(X0,790.500,R,790.500,'#2a2e39',1)+seg(X0,1086.500,R,1086.500,'#2a2e39',1);
cv.innerHTML=g;

// price scale
let s='';
for(let p=128000;p>=100000;p-=2000)s+=`<span style="top:${py(yP(p))}">${p}.00</span>`;
[[834.5,'2000.00'],[879.5,'1000.00'],[924,'0.00'],[969.500,'−1000.00'],[1014,'−2000.00'],[1059,'−3000.00'],[1108,'100.00'],[1141,'80.00'],[1175,'60.00'],[1208,'40.00'],[1241,'20.00'],[1275,'0.00']].forEach(a=>s+=`<span style="top:${py(a[0])}">${a[1]}</span>`);
[[269.5,'124530.96','#801922'],[432.500,'116315.23','#2196f3'],[455.500,'113709.34','#e820f5'],[472.500,'113635.73','#801922'],[489.500,'112480.02','#2a2af5'],[506.500,'111611.94','#ff6d00'],[523.500,'111205.92','#0e3396'],[540.500,'110818.93','#f57c00'],[564.500,'109645.90','#2ebd85',68,1],[581.500,'109580.09','#03302a'],[598.500,'108348.22','#f07f86'],[618.500,'106908.64','#2196f3'],
[946.500,'−485.31','#ffcdd2',56,1],[963.500,'−644.62','#fbb80f',56,1],[980.500,'−1129.93','#2157f3',62],[1218.500,'33.88','#2196f3',43],[1247.500,'16.32','#ff6d00',43]].forEach(a=>s+=`<span class="tagv" style="top:${py(a[0])};background:${a[2]};width:${a[3]||68}px${a[4]?';color:#15171c;font-weight:400':''}">${a[1]}</span>`);
scale.innerHTML=s;
dates.innerHTML=cols.map(c=>`<span style="left:${px(c[0])}${/月/.test(c[1])?';font-weight:600':''}">${c[1]}</span>`).join('');

// legends
const row=(n,...v)=>`<div class="ln d-flex"><span>${n}</span>${v.map(a=>`<span style="color:${a[1]}">${a[0]}</span>`).join('')}</div>`;
const u=t=>`<span style="color:#2ebd85">${t}</span>`;
lg1.innerHTML=`<div class="ln d-flex"><span class="ttl">BTCUSDT <span class="cj">永续 最新价格</span> · 4<span class="cj">小时</span> · Binance</span><span>开=${u('108263.60')}</span><span>高=${u('110014.40')}</span><span>低=${u('108226.60')}</span><span>收=${u('109645.90')}</span>${u('+1382.40 (+1.28%)')}</div>`
+row('BB 20 2',['111611.94','#ff6d00'],['116315.23','#2196f3'],['106908.64','#2196f3'])
+row('MA 5 close 0 SMA 9',['108348.22','#f28c8c'])+row('MA 10 close 0 SMA 9',['109580.09','#08352c'])+row('MA 30 close 0 SMA 9',['112480.02','#2a2af5'])
+row('MA 60 close 0 SMA 9',['111205.92','#15379b'])+row('MA 120 close 0 SMA 9',['110818.93','#f57c00'])+row('MA 240 close 0 SMA 9',['113709.34','#e820f5'])+row('MA 360 close 0 SMA 9',['113635.73','#801922']);
lg2.style.top=py(796);lg2.innerHTML=row('MACD 12 26 close 9',['−485.31','#ffcdd2'],['−1129.93','#2157f3'],['−644.62','#f5a60b']);
lg3.style.top=py(1092);lg3.innerHTML=row('Stoch RSI 14 14 3 3',['33.88','#2196f3'],['16.32','#ff6d00']);
</script>
</body>
</html>
